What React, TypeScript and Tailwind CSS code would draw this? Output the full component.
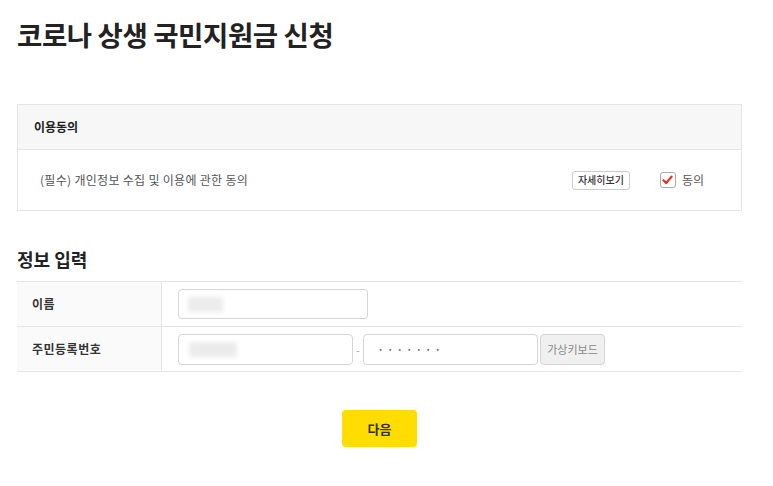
const font = { fontFamily: '"Noto Sans CJK KR", "Noto Sans", sans-serif' }

function Blur({ w }: { w: string }) {
  return <div className={`h-[15px] ${w} bg-[#ececec] blur-[2px]`} />
}

export default function App() {
  return (
    <div style={font} className="h-[486px] w-[773px] bg-white text-[#333]">
      <div className="ml-[17px] w-[725px]">
        <h1 className="pt-[15px] text-[27.5px] font-bold leading-[38px] tracking-[-0.4px] text-[#222]">
          코로나 상생 국민지원금 신청
        </h1>

        <div className="mt-[51px] border border-[#e5e5e5]">
          <div className="flex h-[45px] items-center border-b border-[#e5e5e5] bg-[#f7f7f7] pl-[16px] text-[12px] font-bold text-[#222]">
            이용동의
          </div>
          <div className="flex h-[60px] items-center pl-[22px] pr-[37px]">
            <span className="flex-1 text-[12px] tracking-[0.3px] text-[#555]">(필수) 개인정보 수집 및 이용에 관한 동의</span>
            <button className="h-[19px] w-[58px] rounded-[3px] border border-[#ccc] bg-white text-[10px] font-medium leading-none text-[#333]">
              자세히보기
            </button>
            <label className="ml-[30px] flex items-center gap-[6px] text-[12px] text-[#555]">
              <span className="flex h-[16px] w-[16px] items-center justify-center rounded-[3px] border border-[#aaa] bg-white">
                <svg width="11" height="10" viewBox="0 0 11 10">
                  <path d="M1.5 5.2 L4.2 8 L9.6 1.6" fill="none" stroke="#e0302a" strokeWidth="2.2" strokeLinecap="round" strokeLinejoin="round" />
                </svg>
              </span>
              동의
            </label>
          </div>
        </div>

        <h2 className="mt-[35px] text-[18px] font-bold leading-[26px] text-[#222]">정보 입력</h2>

        <div className="mt-[9px] border-t border-[#e5e5e5]">
          <div className="flex h-[45px] border-b border-[#e5e5e5]">
            <div className="flex w-[145px] items-center border-r border-[#e5e5e5] bg-[#fafafa] pl-[15px] text-[12px] font-bold tracking-[0.5px] text-[#333]">
              이름
            </div>
            <div className="flex items-center pl-[16px]">
              <div className="flex h-[30px] w-[190px] items-center rounded-[4px] border border-[#d5d5d5] pl-[9px]">
                <Blur w="w-[35px]" />
              </div>
            </div>
          </div>
          <div className="flex h-[45px] border-b border-[#e5e5e5]">
            <div className="flex w-[145px] items-center border-r border-[#e5e5e5] bg-[#fafafa] pl-[15px] text-[12px] font-bold tracking-[0.5px] text-[#333]">
              주민등록번호
            </div>
            <div className="flex items-center pl-[16px]">
              <div className="flex h-[31px] w-[175px] items-center rounded-[4px] border border-[#d5d5d5] pl-[10px]">
                <Blur w="w-[48px]" />
              </div>
              <span className="w-[10px] text-center text-[10px] text-[#999]">-</span>
              <div className="flex h-[31px] w-[175px] items-center rounded-[4px] border border-[#d5d5d5] pl-[14px] text-[11px] tracking-[4px] text-[#666]">
                ･･･････
              </div>
              <button className="ml-[2px] h-[31px] w-[65px] rounded-[4px] border border-[#d5d5d5] bg-[#f0f0f0] text-[11px] text-[#888]">
                가상키보드
              </button>
            </div>
          </div>
        </div>

        <div className="mt-[38px] flex justify-center">
          <button className="h-[37px] w-[75px] rounded-[4px] bg-[#ffdd00] text-[13px] font-bold text-[#333]">
            다음
          </button>
        </div>
      </div>
    </div>
  )
}
